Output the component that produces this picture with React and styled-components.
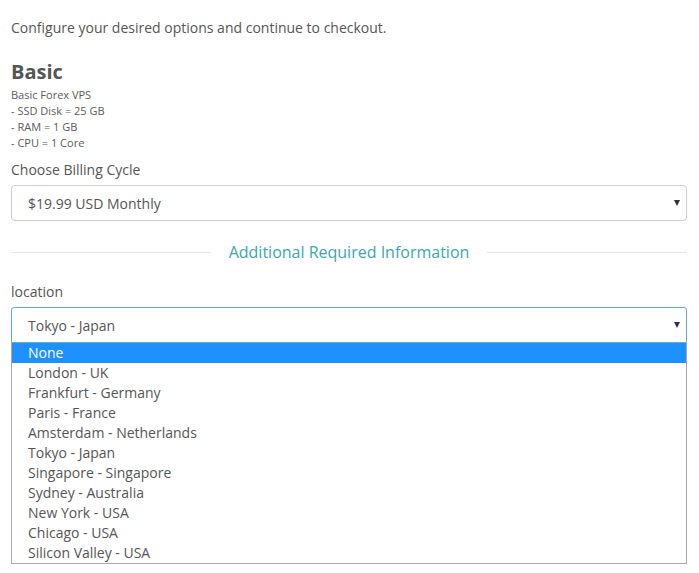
import styled, { createGlobalStyle } from "styled-components";

const GlobalStyle = createGlobalStyle`
  body {
    margin: 0;
    background: #fff;
    font-family: "Open Sans", "Liberation Sans", sans-serif;
    color: #555;
  }
`;

const Page = styled.div`
  width: 676px;
  padding: 18px 0 0 11px;
`;

const Intro = styled.p`
  margin: 0;
  font-size: 14px;
  line-height: 20px;
  color: #555;
`;

const ProductName = styled.h2`
  margin: 22px 0 3px;
  font-size: 20px;
  line-height: 24px;
  font-weight: 700;
  color: #555;
`;

const Description = styled.div`
  font-size: 11px;
  line-height: 16px;
  color: #5a5a5a;
`;

const Label = styled.div`
  margin-top: ${(p) => p.$top || 0}px;
  font-size: 14px;
  line-height: 20px;
  color: #555;
`;

const SelectBox = styled.div`
  box-sizing: border-box;
  height: 36px;
  margin-top: 5px;
  padding: 0 16px;
  display: flex;
  align-items: center;
  justify-content: space-between;
  border: 1px solid ${(p) => (p.$focused ? "#5cb3bf" : "#ccc")};
  border-radius: ${(p) => (p.$focused ? "3px 3px 0 0" : "4px")};
  font-size: 14px;
  color: #555;
  background: #fff;
`;

const Arrow = styled.span`
  width: 0;
  height: 0;
  margin-right: -10px;
  border-left: 3.5px solid transparent;
  border-right: 3.5px solid transparent;
  border-top: 6px solid #333;
`;

const Divider = styled.div`
  display: flex;
  align-items: center;
  gap: 18px;
  margin-top: 16px;
  height: 30px;
`;

const Line = styled.div`
  flex: 1;
  height: 1px;
  background: #e4e4e4;
`;

const DividerTitle = styled.span`
  font-size: 16px;
  color: #3aa6b3;
`;

const OptionList = styled.ul`
  list-style: none;
  margin: 0;
  padding: 0;
  border: 1px solid #a8a8a8;
  border-top: 0;
`;

const Option = styled.li`
  height: 20px;
  line-height: 20px;
  padding-left: 16px;
  font-size: 14px;
  color: ${(p) => (p.$active ? "#fff" : "#555")};
  background: ${(p) => (p.$active ? "#1e90ff" : "#fff")};
`;

const locations = [
  "None",
  "London - UK",
  "Frankfurt - Germany",
  "Paris - France",
  "Amsterdam - Netherlands",
  "Tokyo - Japan",
  "Singapore - Singapore",
  "Sydney - Australia",
  "New York - USA",
  "Chicago - USA",
  "Silicon Valley - USA",
];

const App = () => {
  return (
    <>
      <GlobalStyle />
      <Page>
        <Intro>Configure your desired options and continue to checkout.</Intro>
        <ProductName>Basic</ProductName>
        <Description>
          Basic Forex VPS
          <br />- SSD Disk = 25 GB
          <br />- RAM = 1 GB
          <br />- CPU = 1 Core
        </Description>
        <Label $top={9}>Choose Billing Cycle</Label>
        <SelectBox>
          <span>$19.99 USD Monthly</span>
          <Arrow />
        </SelectBox>
        <Divider>
          <Line />
          <DividerTitle>Additional Required Information</DividerTitle>
          <Line />
        </Divider>
        <Label $top={15}>location</Label>
        <SelectBox $focused>
          <span>Tokyo - Japan</span>
          <Arrow />
        </SelectBox>
        <OptionList>
          {locations.map((loc, i) => (
            <Option key={loc} $active={i === 0}>
              {loc}
            </Option>
          ))}
        </OptionList>
      </Page>
    </>
  );
};

export default App;
